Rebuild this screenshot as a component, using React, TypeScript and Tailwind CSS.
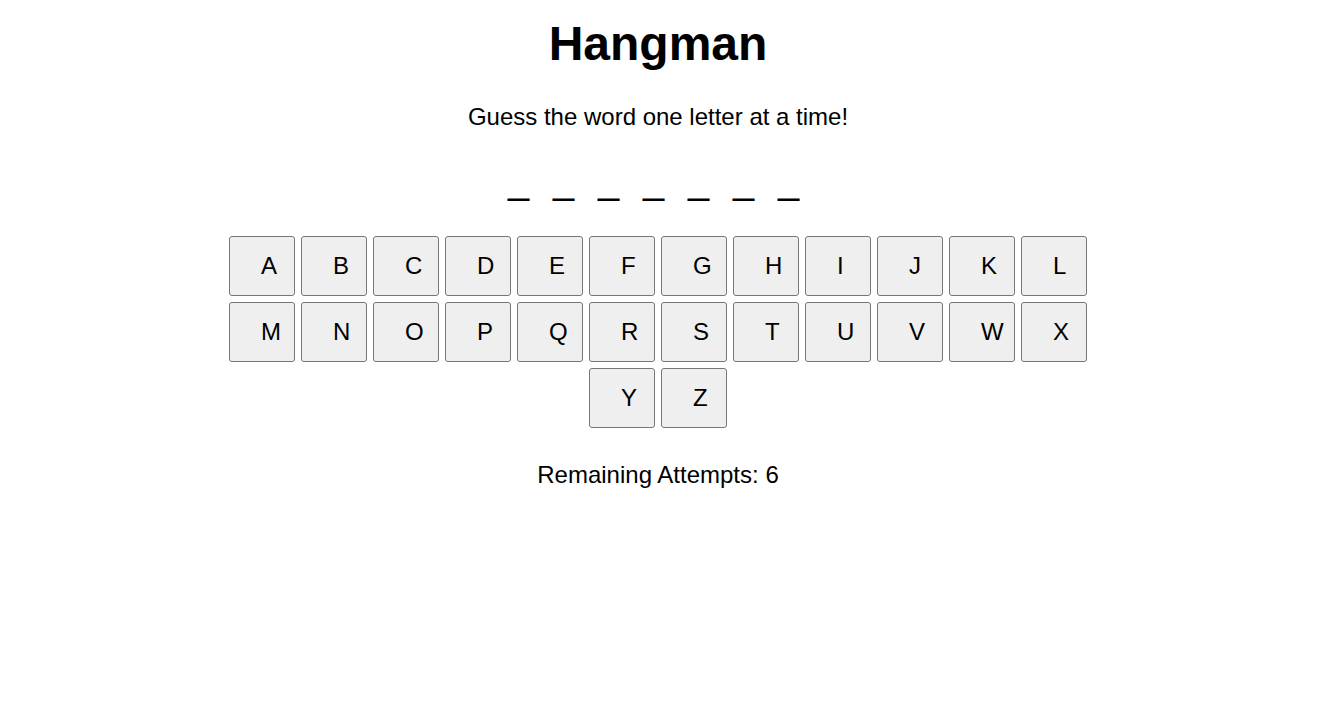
import { useState } from "react";

const LETTERS = "ABCDEFGHIJKLMNOPQRSTUVWXYZ".split("");
const WORD_LENGTH = 7;
const MAX_ATTEMPTS = 6;

const App = () => {
  const [guessed, setGuessed] = useState<string[]>([]);

  const handleGuess = (letter: string) => {
    if (guessed.includes(letter)) return;
    setGuessed([...guessed, letter]);
  };

  return (
    <div
      className="flex min-h-[703px] w-full flex-col items-center bg-white pr-[12px] text-black"
      style={{ fontFamily: '"Liberation Sans", Arial, sans-serif' }}
    >
      <h1 className="mt-[16px] text-[48px] font-bold leading-[56px]">Hangman</h1>
      <p className="mt-[31px] text-[24px] leading-[28px]">Guess the word one letter at a time!</p>

      <div className="mt-[30px] mr-[8px] flex gap-[23px] text-[38px] leading-none">
        {Array.from({ length: WORD_LENGTH }).map((_, i) => (
          <span key={i} className="inline-block w-[22px]">
            _
          </span>
        ))}
      </div>

      <div className="mt-[37px] flex w-[858px] flex-wrap justify-center gap-[6px]">
        {LETTERS.map((letter) => (
          <button
            key={letter}
            onClick={() => handleGuess(letter)}
            className="flex h-[60px] w-[66px] items-center justify-start overflow-visible whitespace-nowrap rounded-[3px] border border-[#767676] bg-[#efefef] pl-[31px] text-left text-[24px] leading-[28px] text-black"
          >
            {letter}
          </button>
        ))}
      </div>

      <p className="mt-[33px] text-[24px] leading-[28px]">
        Remaining Attempts: {MAX_ATTEMPTS - guessed.length}
      </p>
    </div>
  );
};

export default App;
